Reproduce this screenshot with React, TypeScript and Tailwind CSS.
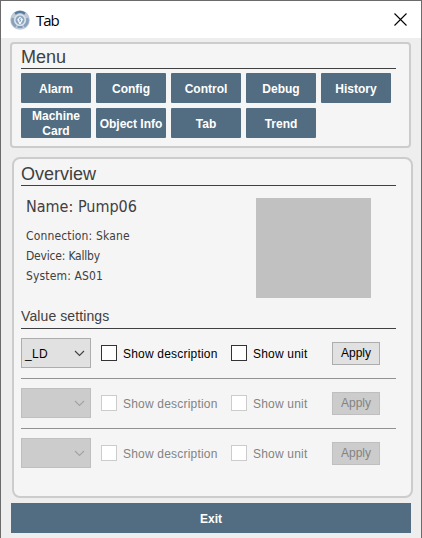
import React from "react";

const menu: string[] = ["Alarm", "Config", "Control", "Debug", "History", "Machine Card", "Object Info", "Tab", "Trend"];

function Logo() {
  return (
    <svg width="20" height="20" viewBox="0 0 20 20">
      <circle cx="10" cy="10" r="9.8" fill="#bccad9" />
      <path d="M5 3.8 A8 8 0 0 1 15 3.8" fill="none" stroke="#587a9c" strokeWidth="2.4" />
      <path d="M2.8 8 A7.5 7.5 0 0 0 6 16.3 M17.2 8 A7.5 7.5 0 0 1 14 16.3" fill="none" stroke="#88a1bb" strokeWidth="2.6" />
      <path d="M7.5 17 H12.5" stroke="#7f9ab6" strokeWidth="2" />
      <circle cx="10" cy="10" r="5.2" fill="#8ca5bf" stroke="#dce4ed" strokeWidth="1.4" />
      <path d="M10 6.4 L13 9.4 L10.6 14 L9.4 14 L7.2 9.4 Z" fill="#f4f8fb" />
      <path d="M10.4 8 L9.4 10 H10.6 L9.8 12" fill="none" stroke="#6e8eae" strokeWidth="0.9" />
    </svg>
  );
}

function Check({ label, disabled, className }: { label: string; disabled: boolean; className: string }) {
  return (
    <div className={`flex items-center ${className}`}>
      <span className={`h-4 w-4 shrink-0 border bg-white ${disabled ? "border-[#ccc]" : "border-[#333]"}`} />
      <span className={`ml-1.5 whitespace-nowrap pt-px text-[12px] leading-4 tracking-[0.2px] ${disabled ? "text-[#838383]" : "text-black"}`}>{label}</span>
    </div>
  );
}

function SettingRow({ value, disabled }: { value: string; disabled: boolean }) {
  return (
    <div className="flex h-[30px] w-[375px] items-center">
      <div className={`flex h-[30px] w-[70px] items-center justify-between border pl-[3px] pr-[5px] text-[12px] ${disabled ? "border-[#bfbfbf] bg-[#ccc]" : "border-[#adadad] bg-[#e1e1e1]"}`}>
        <span className="pt-px tracking-[0.3px] text-black">{value}</span>
        <svg width="11" height="7" viewBox="0 0 11 7" fill="none" stroke={disabled ? "#a3a3a3" : "#404040"} strokeWidth="1.1">
          <path d="M1 1 L5.5 5.5 L10 1" />
        </svg>
      </div>
      <Check label="Show description" disabled={disabled} className="ml-2.5 w-[130px]" />
      <Check label="Show unit" disabled={disabled} className="w-[101px]" />
      <button className={`h-[23px] w-12 border text-[12px] leading-[21px] ${disabled ? "border-[#bfbfbf] bg-[#ccc] text-[#838383]" : "border-[#adadad] bg-[#e1e1e1] text-black"}`}>Apply</button>
    </div>
  );
}

export default function App() {
  return (
    <div className="flex h-[538px] w-[422px] flex-col border-x border-t border-[#6b6b6b] bg-[#eee] font-['Liberation_Sans',Arial,sans-serif] text-[#404040]">
      <header className="flex h-[37px] shrink-0 items-center bg-white pl-[9px] pr-[14px]">
        <Logo />
        <span className="ml-[6px] flex-1 font-['Open_Sans','Noto_Sans',sans-serif] text-[15px] leading-5 tracking-[-1px] text-black">Tab</span>
        <svg width="13" height="13" viewBox="0 0 13 13" stroke="#000" strokeWidth="1.1">
          <path d="M0.5 0.5 L12.5 12.5 M12.5 0.5 L0.5 12.5" />
        </svg>
      </header>

      <section className="ml-[9px] mt-1 h-[106px] w-[401px] shrink-0 rounded-[4px] border-2 border-[#ccc] bg-[#f5f5f5] pl-[9px]">
        <h2 className="h-[25px] w-[375px] border-b border-[#404040] pt-[2px] text-[18px] leading-[22px]">Menu</h2>
        <div className="mt-1 flex w-[375px] flex-wrap gap-[5px]">
          {menu.map((m) => (
            <button key={m} className="flex h-[30px] w-[70px] items-center justify-center rounded-[1px] bg-[#526d82] pt-[2px] text-center text-[12px] font-bold leading-[15px] text-white">
              {m}
            </button>
          ))}
        </div>
      </section>

      <section className="ml-[11px] mt-[9px] h-[341px] w-[401px] shrink-0 rounded-[8px] border-2 border-[#ccc] bg-[#f5f5f5] pl-[7px]">
        <h2 className="h-[27px] w-[375px] border-b border-[#404040] pt-[4px] text-[18px] leading-[22px]">Overview</h2>
        <div className="flex h-[112px] w-[375px] justify-between pl-[5px] pr-[25px] pt-3 font-['DejaVu_Sans_Condensed','DejaVu_Sans',sans-serif]">
          <div className="text-[12px] leading-5 tracking-[0.15px]">
            <p className="mb-[10px] text-[16px] leading-[18px] tracking-normal">Name: Pump06</p>
            <p>Connection: Skane</p>
            <p className="tracking-[-0.2px]">Device: Kallby</p>
            <p>System: AS01</p>
          </div>
          <div className="h-[100px] w-[115px] bg-[#c1c1c1]" />
        </div>
        <h3 className="h-[31px] w-[375px] border-b border-[#404040] pt-[9px] text-[14px] leading-[18px] tracking-[0.1px]">Value settings</h3>
        <div className="mt-[9px] flex w-[375px] flex-col">
          <SettingRow value="_LD" disabled={false} />
          <div className="mb-[9px] mt-[10px] h-px bg-[#929292]" />
          <SettingRow value="" disabled />
          <div className="mb-[9px] mt-[10px] h-px bg-[#929292]" />
          <SettingRow value="" disabled />
        </div>
      </section>

      <button className="ml-[10px] mt-[5px] h-[30px] w-[400px] shrink-0 bg-[#526d82] pt-px text-[12px] font-bold text-white">Exit</button>
    </div>
  );
}
